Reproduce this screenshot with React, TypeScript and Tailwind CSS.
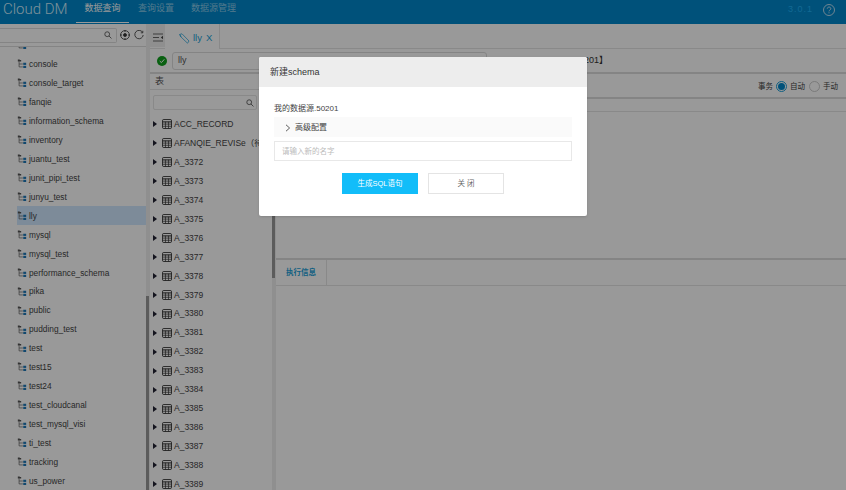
const schemas = ["console","console_target","fanqie","information_schema","inventory","juantu_test","junit_pipi_test","junyu_test","lly","mysql","mysql_test","performance_schema","pika","public","pudding_test","test","test15","test24","test_cloudcanal","test_mysql_visi","ti_test","tracking","us_power"];
const tables = ["ACC_RECORD","AFANQIE_REVISe（待创",...Array.from({length:18},(_,i)=>`A_${3372+i}`)];

function SchemaIcon(){return(
<svg width="10" height="10" viewBox="0 0 12 12" className="shrink-0 mr-[2px]">
<path d="M1 0.5h2l.7.8H5v1.7H1z" fill="#555"/>
<path d="M2.5 3v6.5H7M2.5 6H7" fill="none" stroke="#555" strokeWidth=".8"/>
<rect x="7.5" y="4.5" width="3.5" height="2.6" fill="#1f78b8"/>
<rect x="7.5" y="8.2" width="3.5" height="2.6" fill="#1f78b8"/>
</svg>)}

function TableIcon(){return(
<svg width="10" height="10" viewBox="0 0 11 11" className="shrink-0">
<rect x=".5" y=".5" width="10" height="10" rx="1.5" fill="none" stroke="#333" strokeWidth="1"/>
<path d="M.5 3.2h10" stroke="#333" strokeWidth="1.2"/>
<path d="M.5 5.6h10M.5 8h10M3.8 3v7.5M7.2 3v7.5" stroke="#333" strokeWidth=".8"/>
</svg>)}

function Search(){return(
<svg width="8" height="8" viewBox="0 0 10 10" fill="none" stroke="#666" strokeWidth="1.2"><circle cx="4" cy="4" r="3"/><path d="M6.3 6.3 9.3 9.3"/></svg>)}

export default function App(){
return(
<div className="relative w-[846px] h-[490px] overflow-hidden bg-white text-[#555] text-[9px] font-['Liberation_Sans','Noto_Sans_CJK_SC',sans-serif]">
<header className="h-[24px] bg-[#0087cc] flex items-start">
<div className="w-[76px] pl-[3px] pt-[1px] text-[15px] leading-[16px] font-light font-['Roboto',sans-serif] text-[#d0f0ff]">Cloud DM</div>
<nav className="flex h-[23px] text-[9px] text-[#8ccbea]">
<div className="w-[53px] text-center leading-[17px] border-b border-white text-white">数据查询</div>
<div className="ml-[9px] w-[35px] leading-[17px] whitespace-nowrap">查询设置</div>
<div className="ml-[18px] w-[45px] leading-[17px] whitespace-nowrap">数据源管理</div>
</nav>
<div className="ml-auto mr-[11px] pt-[3px] flex items-center gap-[10px]">
<span className="text-[#1fb0f5] text-[9px] tracking-[1px]">3.0.1</span>
<svg width="12" height="12" viewBox="0 0 12 12" fill="none" stroke="#e8f4fb" strokeWidth=".8"><circle cx="6" cy="6" r="5.5"/><path d="M4.3 4.7c0-2.2 3.5-2.2 3.5 0 0 1.3-1.8 1.3-1.8 2.7M6 8.3v1"/></svg>
</div>
</header>

<div className="flex h-[466px]">
<aside className="w-[146px] shrink-0 flex flex-col">
<div className="h-[23px] shrink-0 flex items-center border-b border-[#ddd]">
<div className="w-[117px] h-[15px] border border-[#ddd] border-l-0 rounded-r-[2px] flex items-center justify-end pr-[4px]"><Search/></div>
<svg className="ml-[3px]" width="10" height="10" viewBox="0 0 10 10" fill="none" stroke="#333" strokeWidth=".8"><circle cx="5" cy="5" r="4.4"/><circle cx="5" cy="5" r="1.5" fill="#333"/><path d="M5 0v2M5 8v2M0 5h2M8 5h2"/></svg>
<svg className="ml-[4px]" width="10" height="10" viewBox="0 0 10 10" fill="none" stroke="#333" strokeWidth=".8"><path d="M8.5 2.2A4.2 4.2 0 1 0 9.2 5M8.8.8v2H6.8"/></svg>
</div>
<div className="flex-1 overflow-hidden">
<div className="h-[18.95px] -mt-[11px] pl-[17px] flex items-center"><SchemaIcon/></div>
{schemas.map(s=>(
<div key={s} className={`h-[18.95px] ml-[17px] flex items-center text-[8.3px] text-[#444] ${s==="lly"?"bg-[#d0e8ff]":""}`}>
<SchemaIcon/><span>{s}</span>
</div>))}
</div>
</aside>

<div className="w-[4px] shrink-0 bg-[#eee] flex flex-col justify-end">
<div className="h-[194px] w-[3px] bg-[#999]"></div>
</div>

<main className="flex-1 flex flex-col min-w-0">
<div className="h-[25px] shrink-0 flex border-b border-[#e4e4e4]">
<div className="w-[15px] h-[23px] bg-[#eee] flex items-start pt-[9px] justify-center">
<svg width="10" height="9" viewBox="0 0 10 8" stroke="#444" strokeWidth=".8"><path d="M0 .5h10M0 4h6M0 7.5h10"/><path d="M10 2.3v3.4L7.8 4z" fill="#444" stroke="none"/></svg>
</div>
<div className="w-[55px] -mb-px bg-white border-r border-[#e4e4e4] flex items-center pl-[14px] pt-[3px] gap-[3px] text-[#1b9fd8] text-[9.5px]">
<svg width="11" height="11" viewBox="0 0 11 11" fill="none" stroke="#1b9fd8" strokeWidth=".7"><path d="M.5 1.5 3 .8l7 7.2-1.5 2.2L2 4z"/><path d="M1 1.5 2 4"/></svg>
<span>lly</span><span className="ml-[1px]">X</span>
</div>
</div>

<div className="h-[25px] shrink-0 flex items-center border-b-2 border-[#ddd]">
<span className="ml-[7px] w-[10px] h-[10px] rounded-full bg-[#0fa01d] flex items-center justify-center">
<svg width="6" height="6" viewBox="0 0 6 6" fill="none" stroke="#fff" strokeWidth="1"><path d="M.7 3 2.4 4.6 5.3 1.3"/></svg>
</span>
<div className="ml-[5px] w-[315px] h-[18px] border border-[#ddd] rounded-[3px] pl-[5px] pt-[1px] flex items-center">lly</div>
<span className="ml-auto mr-[238px] text-[#333] text-[9px]">0201】</span>
</div>

<div className="flex-1 flex min-h-0">
<section className="w-[122px] shrink-0 flex flex-col">
<div className="h-[16px] shrink-0 border-b border-[#e4e4e4] pl-[5px] pt-[1px] flex items-center">表</div>
<div className="h-[25px] shrink-0 pt-[5px] pl-[3px]">
<div className="w-[104px] h-[15px] border border-[#e4e4e4] rounded-[2px] flex items-center justify-end pr-[2px]"><Search/></div>
</div>
<div className="flex-1 overflow-hidden">
{tables.map(t=>(
<div key={t} className="h-[18.95px] pl-[3px] flex items-center text-[8.5px] text-[#444] whitespace-nowrap">
<span className="w-0 h-0 border-y-[3px] border-y-transparent border-l-[4px] border-l-[#223]"></span>
<span className="ml-[5px] mr-[2px] flex"><TableIcon/></span><span>{t}</span>
</div>))}
</div>
</section>
<div className="w-[4px] shrink-0 bg-[#eee] pt-[141px]"><div className="h-[63px] w-[3px] bg-[#999]"></div></div>
<section className="flex-1 flex flex-col min-w-0">
<div className="h-[25px] shrink-0 border-b-2 border-[#ddd] flex items-center justify-end pr-[8px] pt-[2px] text-[7.5px] text-[#444]">
<span>事务</span>
<span className="ml-[3px] w-[11px] h-[11px] rounded-full border border-[#1b9fd8] flex items-center justify-center"><span className="w-[7px] h-[7px] rounded-full bg-[#0087cc]"></span></span>
<span className="ml-[3px]">自动</span>
<span className="ml-[4px] w-[11px] h-[11px] rounded-full border border-[#ccc]"></span>
<span className="ml-[3px]">手动</span>
</div>
<div className="h-[13px] shrink-0 border-b border-[#e4e4e4]"></div>
<div className="flex-1 border-b-2 border-[#ddd]"></div>
<div className="h-[25px] shrink-0 flex">
<div className="w-[51px] border-r border-[#e4e4e4] text-[#1b9fd8] text-[7.5px] flex items-center justify-center font-bold">执行信息</div>
</div>
<div className="h-[205px] shrink-0 border-t border-[#e4e4e4]"></div>
</section>
</div>
</main>
</div>

<div className="absolute inset-0 bg-black/40"></div>

<div className="absolute left-[259px] top-[57px] w-[328px] h-[159px] bg-white rounded-[2px] shadow-sm">
<div className="h-[30px] bg-[#ededed] rounded-t-[2px] pl-[11px] pt-[1px] flex items-center text-[9px] text-[#333]">新建schema</div>
<div className="px-[15px]">
<div className="mt-[16px] h-[11px] leading-[11px] text-[8px] text-[#444]">我的数据源.50201</div>
<div className="mt-[3px] h-[20px] pt-[1px] bg-[#fafafa] flex items-center pl-[11px] text-[8px] text-[#444]">
<svg width="6" height="8" viewBox="0 0 6 8" fill="none" stroke="#333" strokeWidth=".8"><path d="M1 .8 4.6 4 1 7.2"/></svg>
<span className="ml-[4px]">高级配置</span>
</div>
<div className="mt-[4px] h-[20px] pt-[1px] border border-[#e8e8e8] flex items-center pl-[7px] text-[7.5px] text-[#bbb]">请输入新的名字</div>
<div className="mt-[12px] flex justify-center gap-[10px]">
<div className="w-[76px] h-[21px] bg-[#12bdf9] flex items-center justify-center text-white text-[7.5px]">生成SQL语句</div>
<div className="w-[76px] h-[21px] border border-[#e4e4e4] flex items-center justify-center text-[#666] text-[7.5px]">关 闭</div>
</div>
</div>
</div>
</div>
);
}
